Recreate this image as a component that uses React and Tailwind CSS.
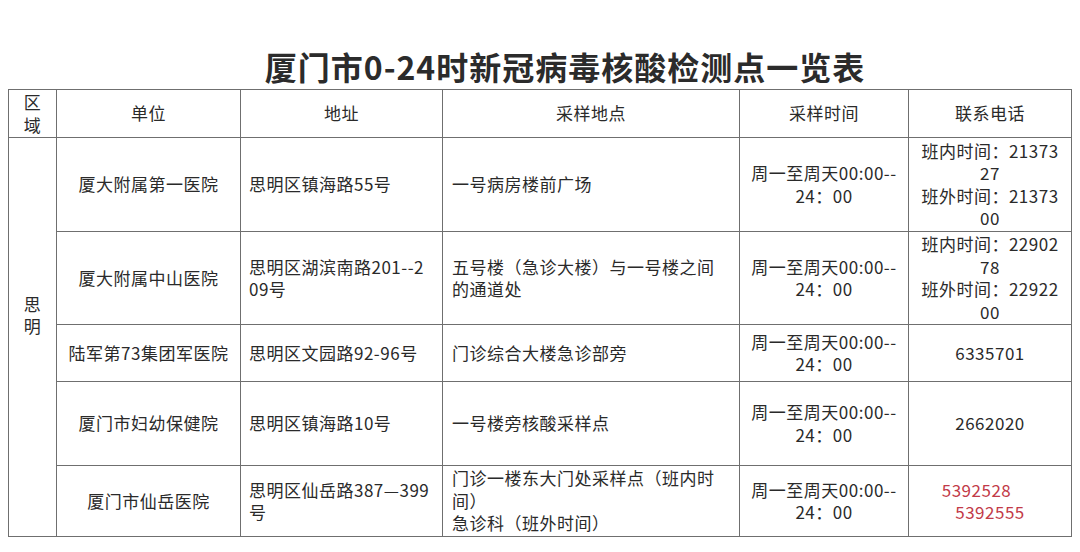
import React from "react";

const TIME = ["周一至周天00:00--", "24：00"];

const rows = [
  {
    unit: "厦大附属第一医院",
    addr: ["思明区镇海路55号"],
    place: ["一号病房楼前广场"],
    phone: ["班内时间：21373", "27", "班外时间：21373", "00"],
    h: "h-[94px]",
  },
  {
    unit: "厦大附属中山医院",
    addr: ["思明区湖滨南路201--2", "09号"],
    place: ["五号楼（急诊大楼）与一号楼之间", "的通道处"],
    phone: ["班内时间：22902", "78", "班外时间：22922", "00"],
    h: "h-[93px]",
  },
  {
    unit: "陆军第73集团军医院",
    addr: ["思明区文园路92-96号"],
    place: ["门诊综合大楼急诊部旁"],
    phone: ["6335701"],
    h: "h-[57px]",
  },
  {
    unit: "厦门市妇幼保健院",
    addr: ["思明区镇海路10号"],
    place: ["一号楼旁核酸采样点"],
    phone: ["2662020"],
    h: "h-[84px]",
  },
  {
    unit: "厦门市仙岳医院",
    addr: ["思明区仙岳路387—399", "号"],
    place: ["门诊一楼东大门处采样点（班内时", "间）", "急诊科（班外时间）"],
    red: true,
    h: "h-[71px]",
  },
];

function Lines({ items }) {
  return items.map((t, i) => (
    <div key={i} className="whitespace-nowrap">
      {t}
    </div>
  ));
}

const cell = "border border-[#6f6f6f] align-middle p-0";

export default function App() {
  return (
    <div
      className="w-[1080px] h-[552px] bg-white text-[#2a2a2a] overflow-hidden"
      style={{ fontFamily: '"Noto Sans CJK SC", "Noto Sans", sans-serif' }}
    >
      <h1 className="pt-[46px] pl-[50px] text-center text-[32px] leading-[40px] font-bold text-[#2b2b2b] tracking-[1px]">
        厦门市0-24时新冠病毒核酸检测点一览表
      </h1>

      <table className="ml-[8px] mt-[3px] w-[1063px] table-fixed border-collapse text-[17px] leading-[22.5px] tracking-[0.5px]">
        <colgroup>
          <col className="w-[48px]" />
          <col className="w-[184px]" />
          <col className="w-[202px]" />
          <col className="w-[297px]" />
          <col className="w-[169px]" />
          <col className="w-[163px]" />
        </colgroup>
        <thead>
          <tr className="h-[48px]">
            <th className={`${cell} font-normal text-center`}>
              <div>区</div>
              <div>域</div>
            </th>
            <th className={`${cell} font-normal text-center`}>单位</th>
            <th className={`${cell} font-normal text-center`}>地址</th>
            <th className={`${cell} font-normal text-center`}>采样地点</th>
            <th className={`${cell} font-normal text-center`}>采样时间</th>
            <th className={`${cell} font-normal text-center`}>联系电话</th>
          </tr>
        </thead>
        <tbody>
          {rows.map((r, i) => (
            <tr key={r.unit} className={r.h}>
              {i === 0 ? (
                <td rowSpan={rows.length} className={`${cell} text-center pb-[44px]`}>
                  <div>思</div>
                  <div>明</div>
                </td>
              ) : null}
              <td className={`${cell} text-center`}>{r.unit}</td>
              <td className={`${cell} text-left pl-[8px]`}>
                <Lines items={r.addr} />
              </td>
              <td className={`${cell} text-left pl-[9px]`}>
                <Lines items={r.place} />
              </td>
              <td className={`${cell} text-center`}>
                <Lines items={TIME} />
              </td>
              <td className={`${cell} text-center`}>
                {r.red ? (
                  <div className="text-[#c23a48]">
                    <div className="pr-[27px]">5392528</div>
                    <div>5392555</div>
                  </div>
                ) : (
                  <Lines items={r.phone} />
                )}
              </td>
            </tr>
          ))}
        </tbody>
      </table>
    </div>
  );
}
